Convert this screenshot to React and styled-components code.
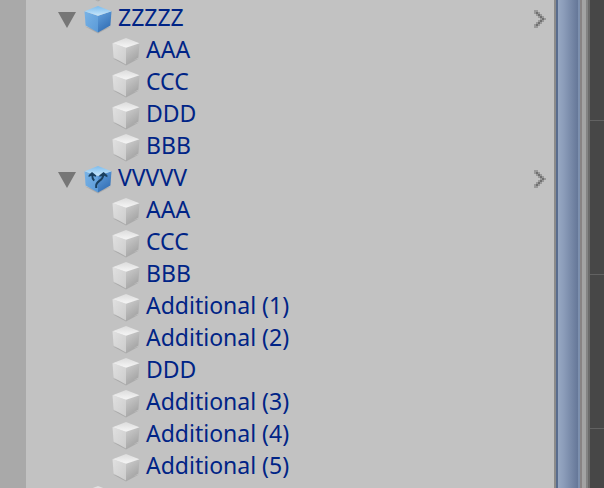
import { useState } from "react";
import styled, { createGlobalStyle } from "styled-components";

const palette = {
  Panel: "#c2c2c2",
  Gutter: "#a9a9a9",
  Label: "#002486",
  Arrow: "#767676",
  Scene: "#474747",
  SceneLine: "#626262",
};

const TREE = [
  { id: "previous", name: "", children: [] },
  {
    id: "z",
    name: "ZZZZZ",
    kind: "prefab",
    children: ["AAA", "CCC", "DDD", "BBB"],
  },
  {
    id: "v",
    name: "VVVVV",
    kind: "variant",
    children: [
      "AAA",
      "CCC",
      "BBB",
      "Additional (1)",
      "Additional (2)",
      "DDD",
      "Additional (3)",
      "Additional (4)",
      "Additional (5)",
    ],
  },
  { id: "next", name: "", children: [] },
];

function CubeGradients() {
  return (
    <StGradients aria-hidden="true">
      <defs>
        <linearGradient id="plain-top" x1="0" y1="0" x2="0" y2="1">
          <stop offset="0" stopColor="#dcdcdc" />
          <stop offset="1" stopColor="#f6f6f6" />
        </linearGradient>
        <linearGradient id="plain-left" x1="0" y1="0" x2="1" y2="1">
          <stop offset="0" stopColor="#e0e0e0" />
          <stop offset="1" stopColor="#cdcdcd" />
        </linearGradient>
        <linearGradient id="plain-right" x1="0.2" y1="0" x2="0.7" y2="1">
          <stop offset="0" stopColor="#cbcbcb" />
          <stop offset="1" stopColor="#9f9f9f" />
        </linearGradient>
        <linearGradient id="blue-top" x1="0" y1="0" x2="0" y2="1">
          <stop offset="0" stopColor="#7dbcec" />
          <stop offset="1" stopColor="#c8e7fc" />
        </linearGradient>
        <linearGradient id="blue-left" x1="0" y1="0" x2="1" y2="1">
          <stop offset="0" stopColor="#79b3e6" />
          <stop offset="1" stopColor="#5a9ad8" />
        </linearGradient>
        <linearGradient id="blue-right" x1="0.2" y1="0" x2="0.7" y2="1">
          <stop offset="0" stopColor="#609edb" />
          <stop offset="1" stopColor="#2f6bb2" />
        </linearGradient>
      </defs>
    </StGradients>
  );
}

function Cube({ kind }) {
  const tone = kind ? "blue" : "plain";
  return (
    <StCube viewBox="0 0 28 28" aria-hidden="true">
      <path d="M1 20.5 14 27.5 27 20.5 14 24Z" fill="#000" opacity="0.12" />
      <path d="M0.5 5.2 14 9.8V26.4L1.6 19.6Z" fill={`url(#${tone}-left)`} />
      <path d="M27.5 5.2 14 9.8V26.4L26.4 19.6Z" fill={`url(#${tone}-right)`} />
      <path d="M14 0 27.5 5.2 14 9.8 0.5 5.2Z" fill={`url(#${tone}-top)`} />
      {kind === "variant" && (
        <g fill="#193f5f">
          <path
            d="M12.2 22V19.4C12.2 14.6 19.2 15 19.2 9M8.2 9C8.2 12 8.6 13 10.2 14.6"
            fill="none"
            stroke="#193f5f"
            strokeWidth="2"
          />
          <path d="M19.6 6 23.4 9.2V11.2L19.6 9.4 15.4 10.8V9.2Z" />
          <path d="M8 6 12 9.2V10.8L8 9.4 4.6 11V9.2Z" />
        </g>
      )}
    </StCube>
  );
}

function Chevron() {
  return (
    <StChevron viewBox="0 0 6 9" aria-hidden="true" shapeRendering="crispEdges">
      <path
        d="M0 0h2v1h1v1h1v1h1v1h1v1H5v1H4v1H3v1H2v1H0V7h1V6h1V5h1V4H2V3H1V2H0Z"
        fill="#999999"
      />
      <path
        d="M1 1h1v1H1ZM2 2h1v1H2ZM3 3h1v1H3ZM4 4h1v1H4ZM3 5h1v1H3ZM2 6h1v1H2ZM1 7h1v1H1Z"
        fill="#707070"
      />
    </StChevron>
  );
}

function TreeGroup({ item }) {
  const [isOpen, setIsOpen] = useState(true);
  return (
    <li>
      <StRow>
        {item.kind && (
          <StFoldout
            type="button"
            aria-label={item.name}
            aria-expanded={isOpen}
            onClick={() => setIsOpen(!isOpen)}
          >
            <StTriangle $isopen={isOpen} viewBox="0 0 18 16" aria-hidden="true">
              <path d="M0 0H18L9 16Z" fill={palette.Arrow} />
            </StTriangle>
          </StFoldout>
        )}
        <StItem $depth={0}>
          <Cube kind={item.kind} />
          <span>{item.name}</span>
        </StItem>
        {item.kind && (
          <StOpenButton type="button" aria-label={item.name}>
            <Chevron />
          </StOpenButton>
        )}
      </StRow>
      {isOpen && (
        <StList>
          {item.children.map((name) => (
            <StRow as="li" key={name}>
              <StItem $depth={1}>
                <Cube />
                <span>{name}</span>
              </StItem>
            </StRow>
          ))}
        </StList>
      )}
    </li>
  );
}

function App() {
  return (
    <StWindow>
      <GlobalStyle />
      <CubeGradients />
      <StGutter />
      <StHierarchy>
        <StTree>
          {TREE.map((item) => (
            <TreeGroup key={item.id} item={item} />
          ))}
        </StTree>
      </StHierarchy>
      <StScrollbar />
      <StDivider />
      <StScene />
    </StWindow>
  );
}
export default App;

const GlobalStyle = createGlobalStyle`
  * {
    box-sizing: border-box;
  }

  body {
    margin: 0;
    background: ${palette.Panel};
    font-family: "Noto Sans", "Lucida Grande", sans-serif;
  }
`;

const StWindow = styled.div`
  display: flex;
  height: 100vh;
  overflow: hidden;
`;

const StGradients = styled.svg`
  position: absolute;
  width: 0;
  height: 0;
`;

const StGutter = styled.div`
  flex: 0 0 26px;
  background: ${palette.Gutter};
`;

const StHierarchy = styled.main`
  flex: 1;
  min-width: 0;
  overflow: hidden;
  background: ${palette.Panel};
`;

const StList = styled.ul`
  margin: 0;
  padding: 0;
  list-style: none;
`;

/* The list is scrolled by most of one row. */
const StTree = styled(StList)`
  margin-top: -30px;
`;

const StRow = styled.div`
  display: flex;
  align-items: center;
  height: 32px;
  padding: 0 8px 0 58px;
`;

const StFoldout = styled.button`
  display: flex;
  align-items: center;
  justify-content: center;
  width: 18px;
  height: 32px;
  margin-left: -26px;
  margin-right: 8px;
  padding: 4px 0 0;
  border: 0;
  background: none;
  cursor: pointer;
`;

const StTriangle = styled.svg`
  flex: none;
  width: 18px;
  height: 16px;
  transform: ${({ $isopen }) => ($isopen ? "none" : "rotate(-90deg)")};
`;

const StItem = styled.div`
  display: flex;
  flex: 1;
  align-items: center;
  gap: 6px;
  min-width: 0;
  padding-bottom: 2px;
  padding-left: ${({ $depth }) => $depth * 28}px;
  color: ${palette.Label};
  font-size: 23px;
  line-height: 32px;
  white-space: nowrap;
`;

const StCube = styled.svg`
  flex: none;
  width: 28px;
  height: 28px;
  margin-top: 6px;
`;

const StOpenButton = styled.button`
  display: flex;
  padding: 2px 0 0;
  border: 0;
  background: none;
  cursor: pointer;
`;

const StChevron = styled.svg`
  width: 12px;
  height: 18px;
`;

const StScrollbar = styled.div`
  flex: 0 0 26px;
  border-left: 2px solid #8b8b8b;
  background: linear-gradient(
    to right,
    #596c8d 0 2px,
    #97a8c3 2px,
    #8b9cb9 8px,
    #657798 22px,
    #7d90ae 22px
  );
`;

const StDivider = styled.div`
  flex: 0 0 8px;
  border-left: 2px solid #888383;
  border-right: 2px solid #838383;
  background: #a3a3a3;
`;

const StScene = styled.div`
  flex: 0 0 16px;
  border-left: 2px solid #6a6a6a;
  background: repeating-linear-gradient(
      to bottom,
      ${palette.SceneLine} 0 1px,
      transparent 1px 154px
    )
    0 -34px / 100% 200vh ${palette.Scene};
`;
